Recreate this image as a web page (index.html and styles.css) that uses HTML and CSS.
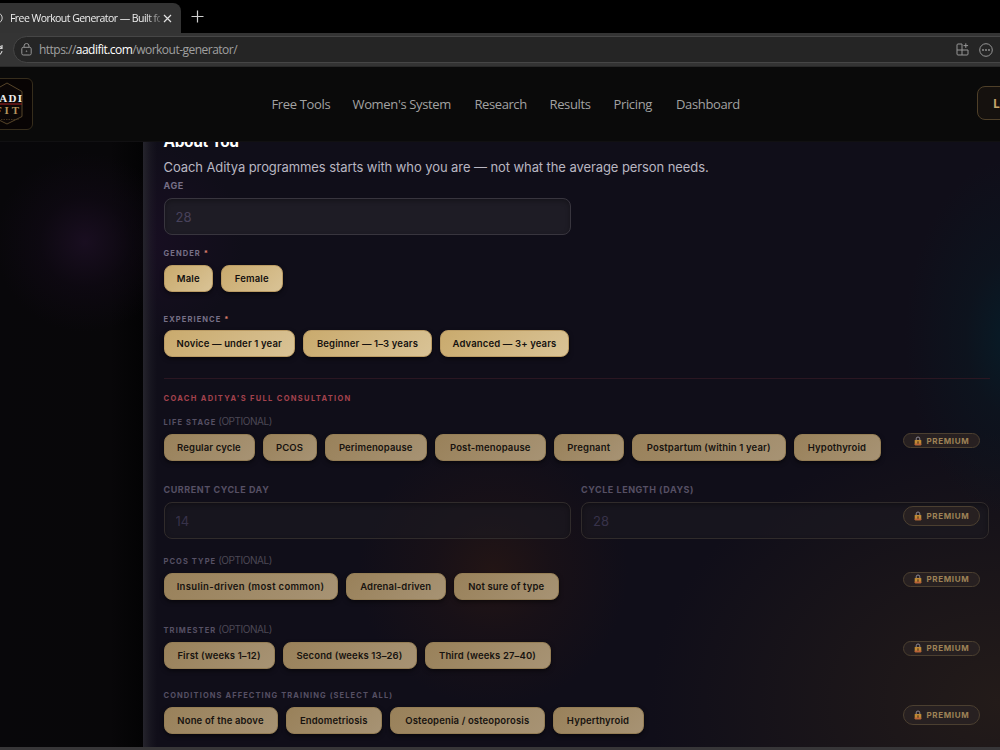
FILE: index.html
```html
<!DOCTYPE html>
<html lang="en">
<head>
    <meta charset="UTF-8">
    <meta name="viewport" content="width=device-width, initial-scale=1.0">
    <title>Free Workout Generator</title>
    <link rel="stylesheet" href="styles.css">
</head>
<body>
    <svg class="defs" width="0" height="0">
        <symbol id="lock" viewBox="0 0 8 10">
            <path d="M2.2 4.5V2.8a1.8 1.8 0 0 1 3.6 0v1.7" fill="none" stroke="#8f8a96" stroke-width="1"/>
            <rect x="0.7" y="4" width="6.6" height="5.2" rx="0.6" fill="#c08a35"/>
            <rect x="0.7" y="7.4" width="6.6" height="1.8" rx="0.6" fill="#b9603a"/>
            <rect x="3.5" y="5.3" width="1" height="2.4" fill="#3c2218"/>
        </symbol>
    </svg>

    <div class="tabs">
        <div class="tab">
            <svg class="globe" width="12" height="12" viewBox="0 0 12 12" fill="none" stroke="#d0d0d0"><circle cx="6" cy="6" r="5.2"/><ellipse cx="6" cy="6" rx="2.4" ry="5.2"/></svg>
            <span class="tab-title">Free Workout Generator — Built fo</span>
            <svg width="9" height="9" viewBox="0 0 9 9" stroke="#e2e2e2" stroke-width="1.2"><path d="M1 1l7 7M8 1l-7 7"/></svg>
        </div>
        <svg class="new-tab" width="13" height="13" viewBox="0 0 13 13" stroke="#cfcfcf" stroke-width="1.2"><path d="M6.5 0.5v12M0.5 6.5h12"/></svg>
    </div>
    <div class="toolbar">
        <svg class="reload" width="12" height="12" viewBox="0 0 12 12" fill="none" stroke="#d0d0d0" stroke-width="1.2"><path d="M10.5 4A5 5 0 1 0 11 7M11 1v3.5H7.5"/></svg>
        <div class="address">
            <svg width="11" height="13" viewBox="0 0 11 13" fill="none" stroke="#969696"><rect x="0.8" y="4.3" width="9.4" height="7.7" rx="1.5"/><path d="M3 4.3V3a2.5 2.5 0 0 1 5 0v1.3"/><circle cx="5.5" cy="8.2" r="0.4"/></svg>
            <span class="url">https://<b>aadifit.com</b>/workout-generator/</span>
            <svg class="apps" width="13" height="13" viewBox="0 0 13 13" fill="none" stroke="#969696"><path d="M6 1H2a1 1 0 0 0-1 1v9a1 1 0 0 0 1 1h9a1 1 0 0 0 1-1V7H1M6 1v11M9.8 0.3v4.6M7.5 2.6h4.6"/></svg>
            <svg width="14" height="14" viewBox="0 0 14 14" fill="none" stroke="#969696"><circle cx="7" cy="7" r="6.3"/><g fill="#969696" stroke="none"><circle cx="4" cy="7" r="0.9"/><circle cx="7" cy="7" r="0.9"/><circle cx="10" cy="7" r="0.9"/></g></svg>
        </div>
    </div>

    <header>
        <div class="logo">
            <svg width="52" height="50" viewBox="0 0 52 50">
                <path d="M27 4l15 8.500v25L27 45l-15-7.500v-25z" fill="#0b0606" stroke="#6b5534" stroke-width="0.8"/>
                <path d="M11 25h31" stroke="#8e1f20" stroke-width="1.2"/>
                <text x="10" y="23" textLength="32" class="logo-top">AADI</text>
                <text x="15" y="34.500" textLength="24" class="logo-bottom">FIT</text>
                <path d="M16 40.500h23" stroke="#4d3d24" stroke-width="0.8" stroke-dasharray="1.500 1"/>
            </svg>
        </div>
        <nav>
            <a class="nav-tools">Free Tools</a>
            <a class="nav-women">Women's System</a>
            <a class="nav-research">Research</a>
            <a class="nav-results">Results</a>
            <a class="nav-pricing">Pricing</a>
            <a class="nav-dashboard">Dashboard</a>
        </nav>
        <a class="login">Login</a>
    </header>

    <main>
        <form class="panel">
            <h2>About You</h2>
            <p class="intro">Coach Aditya programmes starts with who you are — not what the average person needs.</p>

            <div class="group age">
                <label class="field-label">AGE</label>
                <input type="text" placeholder="28">
            </div>

            <div class="group gender">
                <div class="label">GENDER <span class="star">*</span></div>
                <div class="pills">
                    <button type="button" class="w49">Male</button>
                    <button type="button" class="w61">Female</button>
                </div>
            </div>

            <div class="group experience">
                <div class="label">EXPERIENCE <span class="star">*</span></div>
                <div class="pills">
                    <button type="button" class="w131">Novice — under 1 year</button>
                    <button type="button" class="w128">Beginner — 1–3 years</button>
                    <button type="button" class="w129">Advanced — 3+ years</button>
                </div>
            </div>

            <hr>
            <h3>COACH ADITYA'S FULL CONSULTATION</h3>

            <div class="group locked life">
                <div class="label">LIFE STAGE <span class="optional">(OPTIONAL)</span></div>
                <div class="pills">
                    <button type="button" class="w91">Regular cycle</button>
                    <button type="button" class="w54">PCOS</button>
                    <button type="button" class="w102">Perimenopause</button>
                    <button type="button" class="w110">Post-menopause</button>
                    <button type="button" class="w70">Pregnant</button>
                    <button type="button" class="w153">Postpartum (within 1 year)</button>
                    <button type="button" class="w87">Hypothyroid</button>
                </div>
                <span class="premium"><svg width="8" height="10"><use href="#lock"/></svg>PREMIUM</span>
            </div>

            <div class="group locked cycle">
                <div>
                    <label class="field-label day">CURRENT CYCLE DAY</label>
                    <input type="text" placeholder="14">
                </div>
                <div>
                    <label class="field-label length">CYCLE LENGTH (DAYS)</label>
                    <input type="text" placeholder="28">
                </div>
                <span class="premium tall"><svg width="8" height="10"><use href="#lock"/></svg>PREMIUM</span>
            </div>

            <div class="group locked pcos">
                <div class="label">PCOS TYPE <span class="optional">(OPTIONAL)</span></div>
                <div class="pills">
                    <button type="button" class="w174">Insulin-driven (most common)</button>
                    <button type="button" class="w100">Adrenal-driven</button>
                    <button type="button" class="w104">Not sure of type</button>
                </div>
                <span class="premium"><svg width="8" height="10"><use href="#lock"/></svg>PREMIUM</span>
            </div>

            <div class="group locked trimester">
                <div class="label">TRIMESTER <span class="optional">(OPTIONAL)</span></div>
                <div class="pills">
                    <button type="button" class="w111">First (weeks 1–12)</button>
                    <button type="button" class="w134">Second (weeks 13–26)</button>
                    <button type="button" class="w126">Third (weeks 27–40)</button>
                </div>
                <span class="premium"><svg width="8" height="10"><use href="#lock"/></svg>PREMIUM</span>
            </div>

            <div class="group locked conditions">
                <div class="label">CONDITIONS AFFECTING TRAINING (SELECT ALL)</div>
                <div class="pills">
                    <button type="button" class="w114">None of the above</button>
                    <button type="button" class="w96">Endometriosis</button>
                    <button type="button" class="w154">Osteopenia / osteoporosis</button>
                    <button type="button" class="w91">Hyperthyroid</button>
                </div>
                <span class="premium tall"><svg width="8" height="10"><use href="#lock"/></svg>PREMIUM</span>
            </div>
        </form>
    </main>
    <div class="window-edge"></div>
</body>
</html>
```
FILE: styles.css
```css
* {
    box-sizing: border-box;
}
body {
    margin: 0;
    width: 1000px;
    height: 750px;
    overflow: hidden;
    display: flex;
    flex-direction: column;
    background-color: #000;
    font-family: Inter, "Liberation Sans", sans-serif;
}
svg {
    flex: none;
}
.defs {
    display: none;
}

/* browser chrome */
.tabs {
    height: 33px;
    flex: none;
    display: flex;
    align-items: flex-end;
}
.tab {
    width: 181px;
    height: 30px;
    padding-right: 9px;
    display: flex;
    align-items: center;
    background-color: #333;
    border-radius: 0 8px 0 0;
    font: 10.5px "Open Sans", sans-serif;
    color: #eee;
}
.globe {
    margin-left: -9px;
}
.tab-title {
    width: 151px;
    margin: 0 3px 0 7px;
    white-space: nowrap;
    overflow: hidden;
    letter-spacing: -0.55px;
    -webkit-mask-image: linear-gradient(90deg, #000 136px, transparent 156px);
}
.new-tab {
    margin: 0 0 10px 10px;
}
.toolbar {
    height: 34px;
    flex: none;
    display: flex;
    align-items: center;
    background-color: #343434;
    border-bottom: 1px solid #292929;
}
.reload {
    margin-left: -9px;
}
.address {
    width: 1020px;
    height: 27px;
    flex: none;
    margin-left: 10px;
    padding: 0 39px 0 7px;
    display: flex;
    align-items: center;
    background-color: #252525;
    border: 1px solid #464646;
    border-radius: 14px;
}
.url {
    margin-left: 7px;
    font: 12px "Open Sans", sans-serif;
    letter-spacing: -0.52px;
    color: #a0a0a0;
}
.url b {
    font-weight: normal;
    color: #fff;
}
.apps {
    margin: 0 10px 0 auto;
}

header {
    height: 75px;
    flex: none;
    position: relative;
    z-index: 1;
    display: flex;
    align-items: center;
    background-color: #0a0a0a;
    border-bottom: 1px solid #111012;
}
.logo {
    width: 54px;
    height: 52px;
    flex: none;
    margin-left: -21px;
    background-color: #080404;
    border: 1px solid #362d1c;
    border-radius: 6px;
}
.logo svg {
    display: block;
}
.logo-top, .logo-bottom {
    font: bold 11px "Liberation Serif", serif;
    fill: #eee;
}
.logo-bottom {
    fill: #b3945c;
}
nav {
    margin-left: 238.5px;
    display: flex;
    gap: 23px;
    font: 13px "Open Sans", sans-serif;
    letter-spacing: -0.35px;
    color: #a2a2a2;
    white-space: nowrap;
}
.nav-tools { width: 58px; }
.nav-women { width: 99px; }
.nav-research { width: 52px; letter-spacing: -0.42px; }
.nav-results { width: 41px; }
.nav-pricing { width: 39.5px; }
.nav-dashboard { width: 64px; }
.login {
    width: 70px;
    height: 34px;
    flex: none;
    margin: -3px -47px 0 auto;
    padding-left: 15px;
    border: 1px solid #4f4029;
    border-radius: 8px;
    background-color: #15110e;
    color: #c6a66b;
    font: bold 12px/34px "Open Sans", sans-serif;
}

main {
    height: 605px;
    flex: none;
    padding-left: 143px;
    overflow: hidden;
    background:
        radial-gradient(circle at 85px 100px, #190e20 0, rgba(18, 10, 24, 0.5) 45px, rgba(12, 8, 14, 0) 90px),
        linear-gradient(90deg, #08070a 0, #080709 110px, #030304 143px);
}
.panel {
    height: 605px;
    padding: 0 10.5px 0 20.5px;
    display: flow-root;
    background:
        linear-gradient(90deg, #25242c 0, rgba(37, 36, 44, 0.3) 8px, rgba(37, 36, 44, 0) 14px),
        radial-gradient(ellipse 110px 180px at 872px 195px, #071c28 0, rgba(10, 24, 34, 0.5) 45%, rgba(16, 14, 25, 0) 100%),
        radial-gradient(circle at 350px 430px, rgba(38, 22, 20, 0.85) 0, rgba(32, 19, 21, 0.5) 60px, rgba(16, 14, 25, 0) 135px),
        radial-gradient(ellipse 350px 270px at 857px 560px, #231b19 0, rgba(32, 25, 25, 0.6) 50%, rgba(16, 14, 25, 0) 100%),
        radial-gradient(circle at 0 100px, #180e22 0, rgba(25, 14, 35, 0) 100px),
        #100e19;
}
h2 {
    height: 20px;
    margin: -10px 0 0;
    font-size: 15.5px;
    line-height: 20px;
    letter-spacing: -0.4px;
    color: #fff;
}
.intro {
    height: 20px;
    margin: 5px 0 0;
    font-size: 13px;
    line-height: 20px;
    letter-spacing: -0.085px;
    color: #b9b6c1;
    white-space: nowrap;
}
.group {
    position: relative;
}
.label, .field-label {
    display: block;
    height: 12px;
    font-size: 7.5px;
    font-weight: 700;
    line-height: 14px;
    letter-spacing: 1.1px;
    color: #777087;
    white-space: nowrap;
}
.field-label {
    font-size: 9px;
    letter-spacing: 0.55px;
}
.star {
    color: #d97c6c;
}
.optional {
    margin-left: -1px;
    font-size: 10px;
    font-weight: 400;
    line-height: 12px;
    letter-spacing: -0.45px;
    color: #4c4855;
}
input {
    display: block;
    width: 407.5px;
    height: 37px;
    margin-top: 7px;
    padding: 0 11px;
    font: 13px Inter, sans-serif;
    background-color: #1e1c25;
    border: 1px solid #38353e;
    border-radius: 8px;
    box-shadow: inset 0 2px 5px rgba(0, 0, 0, 0.3);
}
input::placeholder {
    color: #48425b;
}
.pills {
    display: flex;
    gap: 8px;
    margin-top: 6px;
}
button {
    height: 27px;
    flex: none;
    padding: 0;
    border: 1px solid #ba9b64;
    border-radius: 8px;
    background: linear-gradient(135deg, #c9aa6d, #d9c396);
    box-shadow: 0 2px 4px rgba(0, 0, 0, 0.5);
    color: #14110f;
    font: 600 9.5px Inter, sans-serif;
    letter-spacing: 0.14px;
    white-space: nowrap;
}
.w49 { width: 49.5px; }
.w54 { width: 54px; }
.w61 { width: 61.5px; }
.w70 { width: 70.5px; }
.w87 { width: 87px; }
.w91 { width: 91px; }
.w96 { width: 96.5px; }
.w100 { width: 100.5px; }
.w102 { width: 102.5px; }
.w104 { width: 104.5px; }
.w110 { width: 110.5px; }
.w111 { width: 111px; }
.w114 { width: 114px; }
.w126 { width: 126px; }
.w128 { width: 129px; }
.w129 { width: 129px; }
.w131 { width: 131.5px; }
.w134 { width: 134px; }
.w153 { width: 153.5px; }
.w154 { width: 154.5px; }
.w174 { width: 174px; letter-spacing: 0.32px; }

.age { margin-top: 2px; }
.gender { margin-top: 12px; }
.experience { margin-top: 21px; }
.experience .pills { margin-top: 5px; }
hr {
    height: 1px;
    margin: 21px 0 0;
    border: 0;
    background-color: #2b1722;
}
h3 {
    height: 12px;
    margin: 13px 0 0;
    font-size: 7.5px;
    font-weight: 700;
    line-height: 14px;
    letter-spacing: 1.33px;
    color: #a4424d;
}
.life { margin-top: 11px; }
.life .pills { margin-top: 7px; }
.cycle {
    display: grid;
    grid-template-columns: 407.5px 407.5px;
    gap: 10px;
    margin-top: 22px;
}
.pcos { margin-top: 15px; }
.pcos .pills, .trimester .pills { margin-top: 7px; }
.trimester { margin-top: 23px; }
.conditions { margin-top: 20px; }

/* premium-only fields */
.locked .label, .locked .field-label {
    color: #565064;
}
.locked .label .optional {
    color: #4c4855;
}
.locked input {
    background-color: rgba(30, 28, 34, 0.55);
    border-color: #302b2b;
}
.locked input::placeholder {
    color: #37324a;
}
.locked button {
    background: linear-gradient(135deg, #99815a, #a79374);
    border-color: #947d55;
    color: #17130f;
}
.premium {
    position: absolute;
    right: 10px;
    top: 18px;
    width: 77px;
    height: 15px;
    display: flex;
    align-items: center;
    padding-left: 10px;
    border: 1px solid #4b3f30;
    border-radius: 10px;
    background-color: #272021;
    color: #9e8256;
    font-size: 8px;
    font-weight: 700;
    letter-spacing: 0.65px;
}
.premium svg {
    margin-right: 5px;
}
.tall {
    top: 23px;
    height: 20px;
}
.pcos .premium, .trimester .premium {
    top: 17.5px;
}
.conditions .tall {
    top: 16px;
}

.window-edge {
    height: 3px;
    flex: none;
    background-color: #373638;
}
```
